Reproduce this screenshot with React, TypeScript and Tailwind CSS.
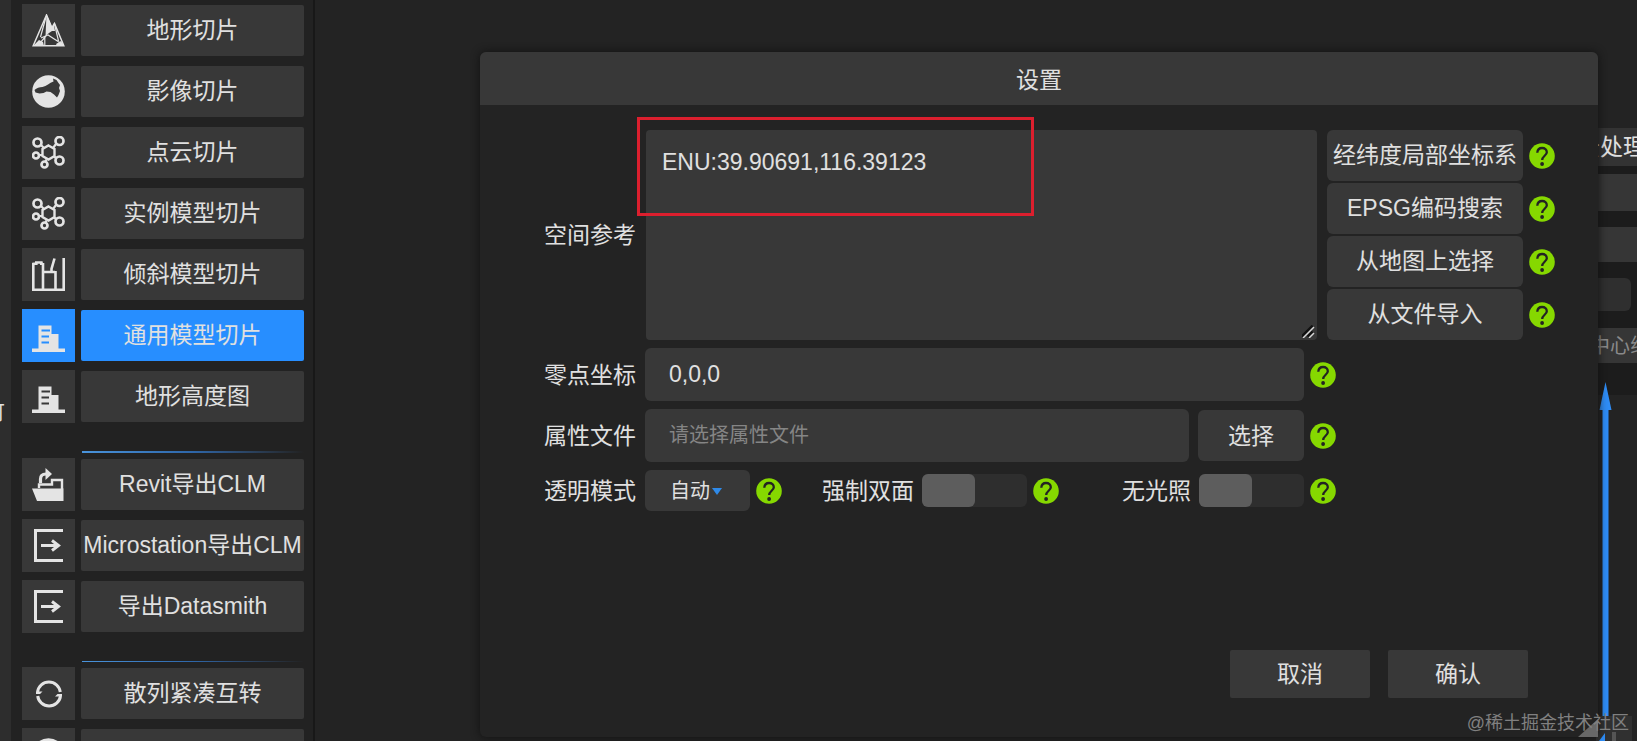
import React from "react";
import type { ReactNode } from "react";

const fontStack = "font-['Liberation_Sans','Noto_Sans_CJK_SC',sans-serif]";

function TerrainIcon() {
  return (
    <svg viewBox="0 0 33 33" className="size-8.25" fill="none" stroke="currentColor" strokeWidth="1.5" aria-hidden="true">
      <path d="M14.500 1 1.200 31.800h30.600L22.500 9.500l-2.500 4.500z" />
      <path d="M14 3 8.500 23M12.800 31.500v-9M9 24l7-3 14 9M22.500 10l4 17M14 22l-6 7" strokeWidth="1.200" />
      <path d="M14.500 0l5.500 13 1.500-4 1.500 8-3 0-3 2-3.500 3zM1 32l6-6 4 2 1 4zM32 32l-3-5-5 3 1 2z" fill="currentColor" stroke="none" />
    </svg>
  );
}

function GlobeIcon() {
  return (
    <svg viewBox="0 0 33 33" className="size-8.25" aria-hidden="true">
      <circle cx="16.500" cy="16.500" r="16.300" fill="currentColor" />
      <path d="M2.500 15c2-2 5-3 8-3 4-1 7-4 11-5.500L21 3.500l3.500 1.500 2 3 1.500 2-1 3 1 3-1.500 4-1.500 2.500-3-3-3.500-2.500-4-.5-3 1.500-4 .5-4-1z" fill="#383838" />
    </svg>
  );
}

function PointsIcon() {
  return (
    <svg viewBox="0 0 33 33" className="size-8.25" fill="none" stroke="currentColor" aria-hidden="true">
      <path d="M16.500 9.500 22.500 13v7l-6 3.500-6-3.500v-7z" strokeWidth="2.400" />
      <path d="M9 9l3 3M24 8l-3 4M7 19h4M14.500 23.500l-1 2M22 20.500l3 2" strokeWidth="2.200" />
      <g strokeWidth="2.700">
        <circle cx="5.500" cy="6.500" r="4" />
        <circle cx="27.500" cy="5" r="4" />
        <circle cx="4" cy="19.500" r="3" />
        <circle cx="12.500" cy="28.500" r="3" />
        <circle cx="27.500" cy="24.500" r="4" />
      </g>
    </svg>
  );
}

function ObliqueIcon() {
  return (
    <svg viewBox="0 0 33 33" className="size-8.25" fill="none" stroke="currentColor" strokeWidth="2.600" aria-hidden="true">
      <path d="M1.300 5.800h3V4.500h5v1.300h1.700M1.300 4.800v26.900h30.400V0M11 5v27M11 14h12M22.500 0.500 19.500 11v3M23.500 13v19" />
    </svg>
  );
}

function BuildingIcon() {
  return (
    <svg viewBox="0 0 33 33" className="size-8.25" fill="currentColor" aria-hidden="true">
      <path fillRule="evenodd" d="M6.500 6.500h13v8.500h7v14.500h6.500V33H0v-3.500h6.500zM9.500 10.500v2H18v-2zM9.500 16.500v2H17v-2zM9.500 22.500v2H17v-2z" />
    </svg>
  );
}

function RevitIcon() {
  return (
    <svg viewBox="0 0 33 33" className="size-8.25" fill="none" aria-hidden="true">
      <path d="M8.500 15v-4Q8.500 6 14 6" stroke="currentColor" strokeWidth="3.200" />
      <path d="M13.500 0 20 6l-6.500 6z" fill="currentColor" />
      <path d="M7 20v-3.500h13V12h10v9" stroke="currentColor" strokeWidth="2.400" />
      <path d="M0 20.500h31.500v12.500H5z" fill="currentColor" />
    </svg>
  );
}

function ExportIcon() {
  return (
    <svg viewBox="0 0 33 33" className="size-8.25" fill="none" stroke="currentColor" strokeWidth="3" aria-hidden="true">
      <path d="M31 1.500H3.500v30H31" />
      <path d="M9 16.500h17M20 11.500l6.500 5-6.500 5" />
    </svg>
  );
}

function ConvertIcon() {
  return (
    <svg viewBox="0 0 33 33" className="size-8.25" fill="none" stroke="currentColor" strokeWidth="3" aria-hidden="true">
      <path d="M5.500 15a11.500 11.500 0 0 1 22.800 0M28.500 19a11.500 11.500 0 0 1-22.800 0" />
      <path d="M4 17h4l2.500-2.500H4zM30 17h-4.500L23 19.500h7z" fill="currentColor" stroke="none" />
    </svg>
  );
}

type Item = { label: string; icon: ReactNode; active?: boolean };

const groups: Item[][] = [
  [
    { label: "地形切片", icon: <TerrainIcon /> },
    { label: "影像切片", icon: <GlobeIcon /> },
    { label: "点云切片", icon: <PointsIcon /> },
    { label: "实例模型切片", icon: <PointsIcon /> },
    { label: "倾斜模型切片", icon: <ObliqueIcon /> },
    { label: "通用模型切片", icon: <BuildingIcon />, active: true },
    { label: "地形高度图", icon: <BuildingIcon /> },
  ],
  [
    { label: "Revit导出CLM", icon: <RevitIcon /> },
    { label: "Microstation导出CLM", icon: <ExportIcon /> },
    { label: "导出Datasmith", icon: <ExportIcon /> },
  ],
  [
    { label: "散列紧凑互转", icon: <ConvertIcon /> },
    { label: "", icon: <GlobeIcon /> },
  ],
];

function NavButton({ label, icon, active }: Item) {
  return (
    <button
      type="button"
      aria-current={active ? "page" : undefined}
      className="group flex w-full items-center gap-1.5 text-[23px] leading-8"
    >
      <span className="flex size-[53px] shrink-0 items-center justify-center bg-[#383838] text-[#e4e4e4] group-aria-[current=page]:bg-[#278eff]">
        {icon}
      </span>
      <span className="flex h-[51px] min-w-0 flex-1 items-center justify-center rounded-xs bg-[#383838] pb-0.5 whitespace-nowrap group-aria-[current=page]:bg-[#278eff]">
        {label}
      </span>
    </button>
  );
}

function Sidebar() {
  return (
    <nav className="flex w-[304px] shrink-0 flex-col border-r-2 border-[#181818] bg-[#222222] pt-1 pr-[9px] pl-[11px]">
      {groups.map((items, i) => (
        <div key={i} className="shrink-0">
          {i > 0 && (
            <div className={`${i === 1 ? "h-0.5" : "h-px"} mt-7 mb-[5px] ml-[60px] bg-linear-to-r from-[#4a94dc] via-[#2e66a8] to-[#222222]`} />
          )}
          <div className="flex flex-col gap-2">
            {items.map((item, j) => (
              <NavButton key={j} {...item} />
            ))}
          </div>
        </div>
      ))}
    </nav>
  );
}

function Help() {
  return (
    <button type="button" aria-label="帮助" className="shrink-0">
      <svg viewBox="0 0 26 26" className="size-6.5" fill="none" aria-hidden="true">
        <circle cx="13" cy="13" r="12.800" fill="#86d800" />
        <path d="M8.300 9.700C8.500 6.600 10.500 5 13.100 5c2.700 0 4.700 1.700 4.700 4.200 0 3.400-4.600 3.800-4.600 7.800" stroke="#232323" strokeWidth="2.300" />
        <circle cx="13.100" cy="21" r="1.900" fill="#232323" />
      </svg>
    </button>
  );
}

const labelClass = "w-[94px] shrink-0 text-right whitespace-nowrap";
const sources = ["经纬度局部坐标系", "EPSG编码搜索", "从地图上选择", "从文件导入"];

function Toggle({ id }: { id: string }) {
  return (
    <input
      id={id}
      type="checkbox"
      role="switch"
      className="h-[33px] w-[105px] shrink-0 appearance-none rounded-md bg-[#2e2e2e] before:block before:h-full before:w-1/2 before:rounded-md before:bg-[#5d5d5d] checked:before:ml-auto checked:before:bg-[#278eff]"
    />
  );
}

function SettingsDialog() {
  return (
    <section
      role="dialog"
      aria-labelledby="dialog-title"
      className="absolute top-[52px] right-[39px] bottom-1 left-[165px] flex flex-col rounded-md bg-[#232323] text-[23px] leading-8 shadow-[0_0_8px_#111111]"
    >
      <h2 id="dialog-title" className="flex h-[53px] shrink-0 items-center justify-center rounded-t-md bg-[#383838] pt-0.5">
        设置
      </h2>
      <form className="flex min-h-0 flex-1 flex-col pt-[25px] pr-[43px] pl-[62px]" onSubmit={(e) => e.preventDefault()}>
        <div className="flex items-center">
          <label htmlFor="srs" className={labelClass}>空间参考</label>
          <div className="relative ml-2.5 flex min-w-0 flex-1">
            <textarea
              id="srs"
              defaultValue="ENU:39.90691,116.39123"
              className="h-[210px] min-w-0 flex-1 resize-none rounded-sm bg-[#383838] px-4 py-4 outline-none"
            />
            <svg viewBox="0 0 13 13" className="pointer-events-none absolute right-0.5 bottom-0.5 size-3.25" aria-hidden="true">
              <path d="M0 12 11 1M6 12l5-5" stroke="#111111" strokeWidth="3.500" />
              <path d="M1 13 12 2M7 13l5-5" stroke="#d8d8d8" strokeWidth="1.500" />
            </svg>
          </div>
          <div className="ml-2.5 flex flex-col gap-0.5">
            {sources.map((s) => (
              <div key={s} className="flex items-center gap-1.5">
                <button type="button" className="flex h-[51px] w-49 items-center justify-center rounded-md bg-[#383838] pb-0.5 whitespace-nowrap">
                  {s}
                </button>
                <Help />
              </div>
            ))}
          </div>
        </div>

        <div className="mr-[219px] flex flex-col gap-2 pt-2">
          <div className="flex items-center">
            <label htmlFor="origin" className={labelClass}>零点坐标</label>
            <input id="origin" defaultValue="0,0,0" className="ml-[9px] h-[53px] min-w-0 flex-1 rounded-md bg-[#383838] px-6 outline-none" />
            <span className="ml-1.5 flex"><Help /></span>
          </div>
          <div className="flex items-center">
            <label htmlFor="attrs" className={labelClass}>属性文件</label>
            <input
              id="attrs"
              placeholder="请选择属性文件"
              className="ml-[9px] h-[53px] min-w-0 flex-1 rounded-md bg-[#383838] px-6 text-[20px] outline-none placeholder:text-[#858585]"
            />
            <button type="button" className="ml-[9px] h-[51px] w-[106px] rounded-md bg-[#383838]">选择</button>
            <span className="ml-1.5 flex"><Help /></span>
          </div>
          <div className="flex items-center">
            <div className="flex items-center">
              <label htmlFor="alpha" className={labelClass}>透明模式</label>
              <span className="relative ml-[9px] flex">
                <select id="alpha" className="h-[41px] w-[105px] appearance-none rounded-md bg-[#383838] pl-[25px] text-[20px] outline-none">
                  <option>自动</option>
                </select>
                <svg viewBox="0 0 10 7" className="pointer-events-none absolute top-[18px] left-[67px] h-[7px] w-2.5" aria-hidden="true">
                  <path d="M0 0h10L5 7z" fill="#2f8ae8" />
                </svg>
              </span>
              <span className="ml-1.5 flex"><Help /></span>
            </div>
            <div className="ml-10 flex items-center">
              <label htmlFor="double" className="mr-2 whitespace-nowrap">强制双面</label>
              <Toggle id="double" />
              <span className="ml-1.5 flex"><Help /></span>
            </div>
            <div className="ml-auto flex items-center">
              <label htmlFor="unlit" className="mr-2 whitespace-nowrap">无光照</label>
              <Toggle id="unlit" />
              <span className="ml-1.5 flex"><Help /></span>
            </div>
          </div>
        </div>

        <div className="mt-auto mr-[27px] mb-[39px] flex justify-end gap-[18px]">
          <button type="button" className="h-12 w-[140px] rounded-xs bg-[#383838]">取消</button>
          <button type="submit" className="h-12 w-[140px] rounded-xs bg-[#383838]">确认</button>
        </div>
      </form>
      <div className="pointer-events-none absolute top-[65px] left-[157px] h-[99px] w-[397px] border-3 border-[#dc1f2e]" />
    </section>
  );
}

function NodePanel() {
  return (
    <aside className="ml-auto flex w-15 flex-col overflow-hidden bg-[#232323] pt-32 whitespace-nowrap">
      <div className="flex flex-col bg-[#1c1c1c] pb-8">
        <div className="flex h-[38px] items-center bg-[#333333] text-[23px]">云处理</div>
        <div className="mt-2 h-[37px] bg-[#363636]" />
        <div className="mt-4 h-[35px] bg-[#363636]" />
        <div className="mt-4 mr-1.5 h-[33px] rounded-md bg-[#2f2f2f]" />
        <div className="mt-[17px] flex h-[35px] items-center bg-[#363636] pl-[13px] text-[20px] text-[#8a8a8a]">中心线</div>
      </div>
    </aside>
  );
}

export default function App() {
  return (
    <div className={`${fontStack} flex h-screen overflow-hidden bg-[#232323] text-[#e0e0e0]`}>
      <div className="flex w-[11px] shrink-0 items-center justify-end overflow-hidden bg-[#2d2d2d] pt-[84px] pr-1.5 text-[20px] whitespace-nowrap">
        可
      </div>
      <Sidebar />
      <main className="relative flex min-w-0 flex-1 bg-[#232323]">
        <NodePanel />
        <svg viewBox="0 0 60 359" className="absolute right-0 bottom-0 h-[359px] w-15" aria-hidden="true">
          <path d="M19 334h36v25H19z" fill="#303030" />
          <path d="M28.500 0l6 28h-3v306h-6V28h-3z" fill="#2e8cf5" />
          <path d="M22 359l6-8v8z" fill="#2e8cf5" />
          <path d="M35 350h4v9h-4z" fill="#555555" />
        </svg>
        <SettingsDialog />
        <svg viewBox="0 0 20 18" className="absolute right-[39px] bottom-1 h-[18px] w-5" aria-hidden="true">
          <path d="M20 0v18H0z" fill="#686868" />
        </svg>
        <div className="absolute right-2 bottom-1.5 text-[18px] leading-6 text-[#808080]">@稀土掘金技术社区</div>
      </main>
    </div>
  );
}
